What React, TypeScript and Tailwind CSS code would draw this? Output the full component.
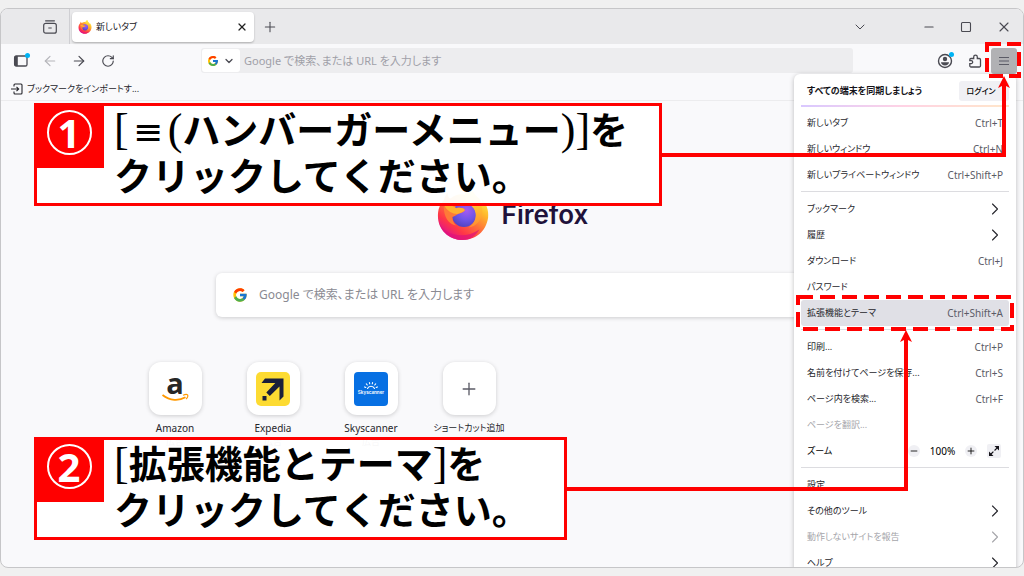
import type { ReactNode } from "react";
import {
	ArrowLeft,
	ArrowRight,
	ChevronDown,
	ChevronRight,
	Minus,
	Plus,
	RotateCw,
	Square,
	X,
} from "lucide-react";
import { FcGoogle } from "react-icons/fc";

type MenuEntry = {
	label: string;
	shortcut?: string;
	submenu?: boolean;
	disabled?: boolean;
	active?: boolean;
};

const menuTabs: MenuEntry[] = [
	{ label: "新しいタブ", shortcut: "Ctrl+T" },
	{ label: "新しいウィンドウ", shortcut: "Ctrl+N" },
	{ label: "新しいプライベートウィンドウ", shortcut: "Ctrl+Shift+P" },
];

const menuLibrary: MenuEntry[] = [
	{ label: "ブックマーク", submenu: true },
	{ label: "履歴", submenu: true },
	{ label: "ダウンロード", shortcut: "Ctrl+J" },
	{ label: "パスワード" },
	{ label: "拡張機能とテーマ", shortcut: "Ctrl+Shift+A", active: true },
];

const menuPage: MenuEntry[] = [
	{ label: "印刷...", shortcut: "Ctrl+P" },
	{ label: "名前を付けてページを保存...", shortcut: "Ctrl+S" },
	{ label: "ページ内を検索...", shortcut: "Ctrl+F" },
	{ label: "ページを翻訳...", disabled: true },
];

const menuSettings: MenuEntry[] = [
	{ label: "設定" },
	{ label: "その他のツール", submenu: true },
	{ label: "動作しないサイトを報告", submenu: true, disabled: true },
	{ label: "ヘルプ", submenu: true },
];

const FirefoxLogo = ({ className, id }: { className: string; id: string }) => (
	<svg viewBox="0 0 56 56" className={className} aria-hidden="true">
		<defs>
			<linearGradient id={`${id}-body`} x1="0.85" y1="0.1" x2="0.25" y2="0.95">
				<stop offset="0" stopColor="#fff44f" />
				<stop offset="0.3" stopColor="#ffb62b" />
				<stop offset="0.55" stopColor="#ff7139" />
				<stop offset="0.8" stopColor="#ff3647" />
				<stop offset="1" stopColor="#e31587" />
			</linearGradient>
			<radialGradient id={`${id}-globe`} cx="0.6" cy="0.3" r="0.8">
				<stop offset="0" stopColor="#a75bf0" />
				<stop offset="0.5" stopColor="#6f55e8" />
				<stop offset="1" stopColor="#4b3fb5" />
			</radialGradient>
			<linearGradient id={`${id}-flame`} x1="0.5" y1="0" x2="0.5" y2="1">
				<stop offset="0" stopColor="#fff44f" />
				<stop offset="0.5" stopColor="#ffc02f" />
				<stop offset="1" stopColor="#ff8a34" />
			</linearGradient>
		</defs>
		<path
			d="M8 14 C9 11 10 8 12 6 C12 9 13 11 15 12 C20 8 25 7 30 8 C31 5 34 2 37 0 C37 5 40 8 45 12 C46 14 47 16 48 17 C48 15 48 14 47 12 C52 17 55 24 54 32 C52 46 41 55 28 55 C13 55 2 44 2 30 C2 23 4 18 8 14Z"
			fill={`url(#${id}-body)`}
		/>
		<path
			d="M3 36 C8 50 29 55 45 44 C41 51 35 55 28 55 C14 55 5 46 3 36Z"
			fill="#e0127a"
			opacity="0.7"
		/>
		<circle cx="29" cy="29" r="12.500" fill={`url(#${id}-globe)`} />
		<path
			d="M8 20 C13 18 17 19 21 22 C25 21 29 22 30 24 C29 26 26 27 23 28 C21 29 20 30 17 31 C17 35 18 37 21 40 C13 39 8 31 8 20Z"
			fill="#ff7a37"
		/>
		<path
			d="M9 20 C13 18 17 19 21 22 C25 21 29 22 30 24 C28 26 25 27 22 28 C17 28 12 25 9 20Z"
			fill="#ffb02f"
		/>
		<path
			d="M30 8 C31 5 34 2 37 0 C37 7 48 13 48 25 C48 34 42 41 34 42 C42 36 43 28 39 22 C36 18 31 16 30 8Z"
			fill={`url(#${id}-flame)`}
		/>
	</svg>
);

const MenuRow = ({ label, shortcut, submenu, disabled, active }: MenuEntry) => (
	<button
		type="button"
		disabled={disabled}
		className={`flex h-[26px] w-full items-center justify-between rounded-[3px] px-1.5 text-left ${
			active ? "bg-[#e0e0e6]" : ""
		} ${disabled ? "text-[#a5a5aa]" : "text-[#26262c]"}`}
	>
		<span className="whitespace-nowrap">{label}</span>
		{shortcut && <span className="text-[10px] text-[#5b5b66]">{shortcut}</span>}
		{submenu && <ChevronRight className="-mr-0.5 size-5" strokeWidth={1.3} />}
	</button>
);

const MenuGroup = ({ items }: { items: MenuEntry[] }) => (
	<>
		{items.map((item) => (
			<MenuRow key={item.label} {...item} />
		))}
	</>
);

const Separator = () => <div className="mt-[3px] mb-1 h-px bg-[#dcdce0]" />;

const AppMenu = () => (
	<nav
		aria-label="Firefox"
		className="absolute top-[65px] right-[7px] w-[222px] rounded-md bg-white px-[7px] text-[9px] shadow-[0_1px_5px_rgba(0,0,0,0.25)]"
	>
		<div className="flex items-center justify-between pt-[7px] pb-1 pl-1.5">
			<span className="font-bold text-[#15141a]">すべての端末を同期しましょう</span>
			<button
				type="button"
				className="h-5 w-[50px] rounded-[3px] bg-[#f0f0f4] pr-1.5 text-[8px] font-medium"
			>
				ログイン
			</button>
		</div>
		<div className="mb-[3px] h-0.5 bg-linear-to-r from-[#d9c8ff] via-[#ffd3e4] to-[#ffe6c9]" />
		<MenuGroup items={menuTabs} />
		<Separator />
		<MenuGroup items={menuLibrary} />
		<Separator />
		<MenuGroup items={menuPage} />
		<div className="flex h-[26px] items-center pl-1.5">
			<span className="flex-1">ズーム</span>
			<button
				type="button"
				aria-label="縮小"
				className="flex size-3 items-center justify-center rounded-full bg-[#f0f0f4]"
			>
				<Minus className="size-2.5" />
			</button>
			<span className="w-[45px] text-center text-[10px]">100%</span>
			<button
				type="button"
				aria-label="拡大"
				className="flex size-3 items-center justify-center rounded-full bg-[#f0f0f4]"
			>
				<Plus className="size-2.5" />
			</button>
			<button
				type="button"
				aria-label="全画面表示"
				className="mr-2 ml-2.5 flex size-3.5 items-center justify-center rounded-[2px] bg-[#f0f0f4]"
			>
				<svg viewBox="0 0 12 12" className="size-3" aria-hidden="true">
					<path d="M6.5 1H11v4.5zM1 6.5V11h4.5z" fill="#15141a" />
					<path d="M3 9l6-6" stroke="#15141a" strokeWidth="1.2" strokeDasharray="3.4 1.6" />
				</svg>
			</button>
		</div>
		<Separator />
		<MenuGroup items={menuSettings} />
	</nav>
);

const TitleBar = () => (
	<div className="flex h-[35px] items-center bg-[#e9e9eb] text-[#4a4a52]">
		<div className="flex h-full w-[69px] items-center justify-end border-r border-[#cfcfd3] pr-3">
			<button type="button" aria-label="最近のブラウジング">
				<svg viewBox="0 0 14 14" className="size-3.5" fill="none" stroke="currentColor" strokeWidth="1.2">
					<path d="M2.6.8h8.8" strokeLinecap="round" />
					<rect x="0.7" y="3.4" width="12.6" height="9.8" rx="2" />
					<path d="M5.300 8h3.400" />
				</svg>
			</button>
		</div>
		<div className="ml-0.5 flex h-[30px] w-[182px] items-center rounded-[4px] bg-white px-1.5 shadow-[0_1px_2px_rgba(0,0,0,0.25)]">
			<FirefoxLogo className="size-3.5" id="tab" />
			<span className="ml-1 flex-1 text-[9px] text-[#15141a]">新しいタブ</span>
			<button type="button" aria-label="タブを閉じる">
				<X className="size-3 text-[#222]" strokeWidth={2.5} />
			</button>
		</div>
		<button type="button" aria-label="新しいタブを開く" className="ml-2">
			<Plus className="size-4" strokeWidth={1.6} />
		</button>
		<div className="ml-auto flex items-center pr-[11px]">
			<button type="button" aria-label="タブ一覧" className="mr-[54px]">
				<ChevronDown className="size-4" strokeWidth={1.5} />
			</button>
			<button type="button" aria-label="最小化" className="mr-6">
				<Minus className="size-3.5" strokeWidth={2} />
			</button>
			<button type="button" aria-label="最大化" className="mr-6">
				<Square className="size-3" strokeWidth={2.2} />
			</button>
			<button type="button" aria-label="閉じる">
				<X className="size-4" strokeWidth={1.7} />
			</button>
		</div>
	</div>
);

const Toolbar = () => (
	<div className="flex h-[33px] items-center pr-1.5 pl-3 text-[#4a4a52]">
		<button type="button" aria-label="サイドバー" className="relative">
			<svg viewBox="0 0 16 16" className="size-4" fill="none" stroke="currentColor" strokeWidth="1.3">
				<rect x="1.6" y="3" width="12.4" height="10" rx="1.6" />
				<path d="M3.300 3v10" strokeWidth="3" />
			</svg>
			<span className="absolute top-0 -right-px size-[5px] rounded-full bg-[#00b3f4]" />
		</button>
		<button type="button" aria-label="戻る" className="ml-[13px] text-[#b5b5ba]">
			<ArrowLeft className="size-4" strokeWidth={1.8} />
		</button>
		<button type="button" aria-label="進む" className="ml-[13px]">
			<ArrowRight className="size-4" strokeWidth={1.8} />
		</button>
		<button type="button" aria-label="再読み込み" className="ml-3.5">
			<RotateCw className="size-3.5" strokeWidth={2} />
		</button>
		<form className="ml-[86px] flex h-[25px] flex-1 items-center rounded-[3px] bg-[#ededef] p-px">
			<button
				type="button"
				aria-label="検索エンジン"
				className="flex h-full w-[38px] items-center justify-center gap-1 rounded-[3px] bg-white"
			>
				<FcGoogle className="size-3" />
				<ChevronDown className="size-3" strokeWidth={2.5} />
			</button>
			<input
				type="text"
				aria-label="アドレス"
				placeholder="Google で検索、または URL を入力します"
				className="h-full flex-1 bg-transparent px-1 text-[11px] placeholder:text-[#a0a0a8]"
			/>
		</form>
		<div className="ml-[84px] flex items-center">
			<button type="button" aria-label="アカウント" className="relative">
				<svg viewBox="0 0 16 16" className="size-4" fill="currentColor">
					<circle cx="8" cy="8" r="6.500" fill="none" stroke="currentColor" strokeWidth="1.400" />
					<circle cx="8" cy="6" r="2.200" />
					<path d="M4 9.200h8c0 1.900-1.800 3.200-4 3.200s-4-1.300-4-3.200z" />
				</svg>
				<span className="absolute -top-px -right-px size-[5px] rounded-full bg-[#00b3f4]" />
			</button>
			<button type="button" aria-label="拡張機能" className="ml-3.5">
				<svg viewBox="0 0 16 16" className="size-4" fill="none" stroke="currentColor" strokeWidth="1.3">
					<path d="M4 5.5h2.7V3.9a1.8 1.8 0 0 1 3.6 0v1.6h2a1.2 1.2 0 0 1 1.2 1.2v6.1a1.2 1.2 0 0 1-1.2 1.2H4a1.2 1.2 0 0 1-1.2-1.2v-2.2h1.4a1.5 1.5 0 0 0 0-3H2.8v-.9A1.2 1.2 0 0 1 4 5.5z" />
				</svg>
			</button>
			<button
				type="button"
				aria-label="メニュー"
				className="ml-2 flex size-[26px] items-center justify-center rounded-[3px] bg-[#b1b1b4]"
			>
				<svg viewBox="0 0 10 10" className="size-2.5" stroke="#5b5b66" strokeWidth="1.2">
					<path d="M0 1.5h10M0 5h10M0 8.5h10" />
				</svg>
			</button>
		</div>
	</div>
);

const BookmarksBar = () => (
	<div className="flex h-6 items-center border-b border-[#ececee] pl-2.5 text-[9px]">
		<a href="#import" className="flex items-center gap-1 text-[#26262c]">
			<svg viewBox="0 0 12 12" className="size-3" fill="none" stroke="currentColor" strokeWidth="1.1">
				<path d="M3 3.6V2a1 1 0 0 1 1-1h6a1 1 0 0 1 1 1v8a1 1 0 0 1-1 1H4a1 1 0 0 1-1-1V8.400M0 6h7.500M5.500 3.800L7.700 6 5.500 8.200" />
			</svg>
			ブックマークをインポートす...
		</a>
	</div>
);

const Shortcut = ({
	label,
	sponsored,
	children,
}: {
	label: string;
	sponsored?: boolean;
	children: ReactNode;
}) => (
	<a href="#shortcut" className="flex w-[98px] flex-col items-center text-[#26262c]">
		<span className="flex size-[53px] items-center justify-center rounded-xl bg-white shadow-[0_1px_4px_rgba(0,0,0,0.18)]">
			{children}
		</span>
		<span className={`mt-[5px] leading-4 whitespace-nowrap ${sponsored ? "text-[10px]" : "text-[9px]"}`}>
			{label}
		</span>
		{sponsored && <span className="text-[9px] leading-3 text-[#5b5b66]">広告</span>}
	</a>
);

const NewTabPage = () => (
	<main className="flex flex-col items-center pt-[86px]">
		<div className="flex items-center gap-3">
			<FirefoxLogo className="size-[54px]" id="hero" />
			<span className="pt-0.5 font-[Inter] text-[26px] leading-[52px] font-semibold text-[#20123a]">
				Firefox
			</span>
		</div>
		<form className="mt-8 flex h-11 w-full max-w-[592px] items-center rounded-md bg-white px-4 shadow-[0_1px_4px_rgba(0,0,0,0.18)]">
			<FcGoogle className="size-4" />
			<input
				type="search"
				aria-label="検索"
				placeholder="Google で検索、または URL を入力します"
				className="ml-[11px] flex-1 bg-transparent text-[12px] placeholder:text-[#8a8a92]"
			/>
		</form>
		<div className="mt-[45px] flex w-full max-w-[772px]">
			<Shortcut label="Amazon" sponsored>
				<svg viewBox="0 0 34 34" className="size-[34px] overflow-visible" aria-hidden="true">
					<text x="17" y="22" textAnchor="middle" fontSize="29" fontWeight="700" fontFamily="Open Sans, sans-serif" fill="#262626">
						a
					</text>
					<path d="M4.500 23C12 29 21 29 27.500 25.300" fill="none" stroke="#f90" strokeWidth="1.700" />
					<path d="M25 23.200c2-.8 4-.9 4.600-.3.500.8-.2 2.900-1.400 4.300" fill="none" stroke="#f90" strokeWidth="1.100" />
				</svg>
			</Shortcut>
			<Shortcut label="Expedia" sponsored>
				<svg viewBox="0 0 34 34" className="size-[34px]" aria-hidden="true">
					<rect width="34" height="34" rx="5" fill="#fddb32" />
					<path d="M9 6.500h18.500v18l-4 4V14.500L13.800 24 10.300 20.500 19.300 11H5.500z" fill="#191e3b" />
					<path d="M6.500 24h4v4.500h-4z" fill="#191e3b" />
				</svg>
			</Shortcut>
			<Shortcut label="Skyscanner" sponsored>
				<svg viewBox="0 0 34 34" className="size-[34px]" aria-hidden="true">
					<rect width="34" height="34" rx="4" fill="#0770e3" />
					<path
						d="M13.500 16.500a3.800 3.800 0 0 1 7 0M11.800 15.500l-1.200-.6M13.300 13l-1-1.200M15.700 11.800l-.3-1.300M18.300 11.800l.3-1.300M20.700 13l1-1.200M22.200 15.500l1.200-.6"
						fill="none"
						stroke="#fff"
						strokeWidth="1.100"
						strokeLinecap="round"
					/>
					<text x="17" y="21.500" textAnchor="middle" fontSize="4.600" fontWeight="600" fontFamily="Inter, sans-serif" fill="#fff">
						Skyscanner
					</text>
				</svg>
			</Shortcut>
			<Shortcut label="ショートカット追加">
				<Plus className="size-5 text-[#5b5b66]" strokeWidth={1.6} />
			</Shortcut>
		</div>
	</main>
);

const Callout = ({
	step,
	className,
	children,
}: {
	step: number;
	className: string;
	children: ReactNode;
}) => (
	<section
		className={`absolute left-[34px] flex items-start border-3 border-[#ff0000] bg-white/95 pb-[5px] ${className}`}
	>
		<div className="flex h-[62px] w-[67px] items-start justify-center bg-[#ff0000] pt-1 pr-[3px]">
			<span className="flex size-[45px] items-center justify-center rounded-full border-2 border-white text-[40px] leading-none font-bold text-white">
				{step}
			</span>
		</div>
		<p className="ml-2.5 text-[38px] leading-[46px] font-bold whitespace-nowrap text-black [font-feature-settings:normal]">
			{children}
		</p>
	</section>
);

const Bracket = ({ children }: { children: string }) => (
	<span className="font-['Liberation_Serif'] text-[44px] leading-none font-normal">{children}</span>
);

// Red connector running right from a callout, then up to its target
const Connector = ({ className }: { className: string }) => (
	<div className={`pointer-events-none absolute border-r-4 border-b-4 border-[#ff0000] ${className}`}>
		<svg viewBox="0 0 12 12" className="absolute -top-2 -right-2 size-3" aria-hidden="true">
			<path d="M6 0l6 12-6-3-6 3z" fill="#ff0000" />
		</svg>
	</div>
);

const DashedFrame = ({ className, dash }: { className: string; dash: string }) => (
	<svg className={`pointer-events-none absolute overflow-visible ${className}`} aria-hidden="true">
		<rect width="100%" height="100%" fill="none" stroke="#ff0000" strokeWidth="4" strokeDasharray={dash} />
	</svg>
);

const App = () => {
	return (
		<div className="relative flex h-screen min-h-[576px] flex-col overflow-hidden bg-[#f0f0f0] py-2 [font-family:'Noto_Sans','Noto_Sans_CJK_JP',sans-serif] [font-feature-settings:'palt']">
			<div className="relative flex-1 overflow-hidden rounded-lg border border-[#c6c6c8] bg-[#f9f9fb]">
				<TitleBar />
				<Toolbar />
				<BookmarksBar />
				<NewTabPage />
				<AppMenu />
			</div>

			<Callout step={1} className="top-[103px] w-[628px]">
				<Bracket>[</Bracket>
				<span className="inline-block w-[39px] text-center font-['DejaVu_Sans'] text-[36px] leading-none font-normal">≡</span>
				<Bracket>(</Bracket>
				ハンバーガーメニュー
				<Bracket>)</Bracket>
				<Bracket>]</Bracket>を
				<br />
				クリックしてください。
			</Callout>
			<Connector className="top-[84px] right-[18px] left-[662px] h-[73px]" />
			<DashedFrame className="top-[44px] right-[5px] h-8 w-8" dash="14 6" />

			<Callout step={2} className="top-[437px] w-[533px]">
				<Bracket>[</Bracket>
				拡張機能とテーマ
				<Bracket>]</Bracket>を
				<br />
				クリックしてください。
			</Callout>
			<Connector className="top-[338px] right-[116px] left-[567px] h-[153px]" />
			<DashedFrame className="top-[297px] right-3 h-8 w-[214px]" dash="15 7" />
		</div>
	);
};

export default App;
